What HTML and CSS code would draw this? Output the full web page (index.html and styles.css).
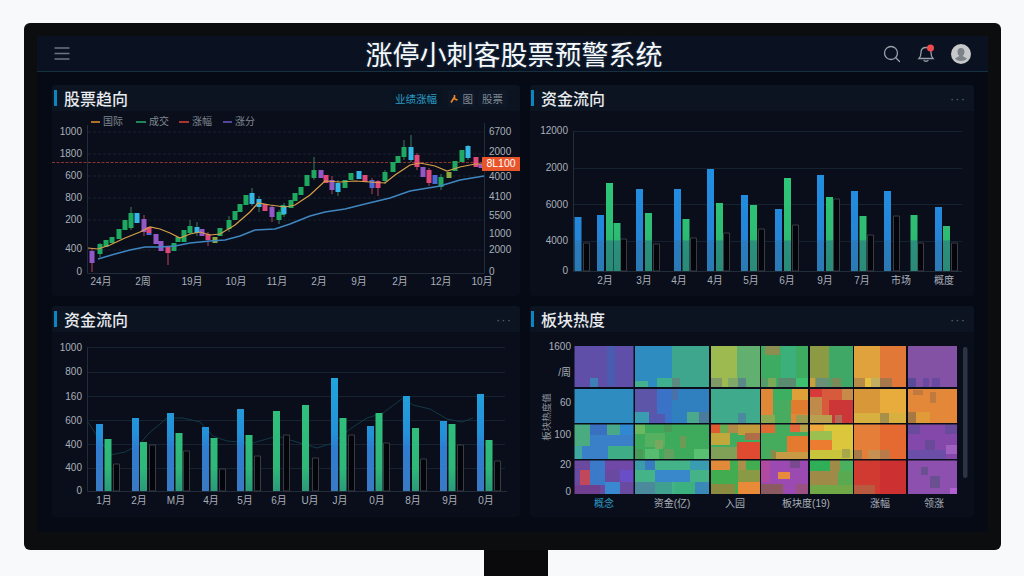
FILE: index.html
```html
<!DOCTYPE html>
<html lang="zh-CN">

    <head>
        <meta charset="UTF-8">
        <meta name="viewport" content="width=device-width, initial-scale=1.0">
        <link rel="stylesheet" href="styles.css">
        <title>涨停小刺客股票预警系统</title>
    </head>

    <body>
        <div class="monitor">
            <div class="screen">
                <header class="topbar">
                    <svg class="menu-icon" width="16" height="13" viewBox="0 0 16 13">
                        <path d="M0.5 1H15.5M0.5 6.500H15.500M0.500 12H15.500"/>
                    </svg>
                    <h1 class="app-title">涨停小刺客股票预警系统</h1>
                    <div class="topbar-icons">
                        <svg class="top-icon" width="18" height="18" viewBox="0 0 18 18">
                            <circle cx="8" cy="8" r="6.500"/>
                            <path d="M12.800 12.800L16.500 16.500"/>
                        </svg>
                        <svg class="top-icon" width="18" height="19" viewBox="0 0 18 19">
                            <path d="M2 14.500c1.500-1.500 2-3 2-6 0-3 2-5 5-5s5 2 5 5c0 3 .5 4.500 2 6z"/>
                            <path d="M7 16.500c.5 1 3.500 1 4 0"/>
                            <circle class="bell-dot" cx="13.500" cy="4" r="3.500"/>
                        </svg>
                        <svg class="avatar" width="20" height="20" viewBox="0 0 20 20">
                            <circle class="avatar-bg" cx="10" cy="10" r="10"/>
                            <path class="avatar-man" d="M10 4c2.200 0 3.500 1.700 3.500 3.800 0 1.800-.8 3.200-1.700 4 .3 1 2.500 1.500 4.200 2.900a9 9 0 0 1-12 0c1.700-1.400 3.900-1.900 4.200-2.900-.9-.8-1.700-2.200-1.700-4C6.500 5.700 7.800 4 10 4z"/>
                        </svg>
                    </div>
                </header>

                <main class="board">
                    <section class="panel">
                        <div class="panel-head">
                            <span class="panel-mark"></span>
                            <h2 class="panel-title">股票趋向</h2>
                            <div class="tabs">
                                <span class="tab tab-active">业绩涨幅</span>
                                <span class="tab tab-chart">
                                    <svg class="tab-icon" width="8" height="9" viewBox="0 0 8 9"><path d="M1 8.500L4.500 3M4.500 1V5M4.500 5L7.500 6"/></svg>
                                    图
                                </span>
                                <span class="tab">股票</span>
                            </div>
                        </div>
                        <svg class="chart" viewBox="52 111 468 185">
                            <g class="grid-dash">
                                <path d="M88 132H484M88 154H484M88 176H484M88 198H484M88 220H484M88 250H484"/>
                            </g>
                            <path class="axis" d="M87.500 125V273.500H484.500V123"/>
                            <path class="alert-line" d="M52 162.500H484"/>

                            <g class="legend">
                                <path class="ln-orange" d="M91 122H100"/><text class="legend-text" x="103" y="122">国际</text>
                                <path class="ln-green" d="M136 122H146"/><text class="legend-text" x="149" y="122">成交</text>
                                <path class="ln-red" d="M179 122H189"/><text class="legend-text" x="192" y="122">涨幅</text>
                                <path class="ln-purple" d="M223 122H232"/><text class="legend-text" x="235" y="122">涨分</text>
                            </g>

                            <g class="lbl end">
                                <text x="82" y="132">1000</text>
                                <text x="82" y="154">1800</text>
                                <text x="82" y="176">600</text>
                                <text x="82" y="198">800</text>
                                <text x="82" y="220">200</text>
                                <text x="82" y="249">400</text>
                                <text x="82" y="272">0</text>
                            </g>
                            <g class="lbl">
                                <text x="489" y="132">6700</text>
                                <text x="489" y="152">2000</text>
                                <text x="489" y="177">4000</text>
                                <text x="489" y="197">4100</text>
                                <text x="489" y="216">5500</text>
                                <text x="489" y="234">1000</text>
                                <text x="489" y="250">2000</text>
                                <text x="489" y="272">0</text>
                            </g>
                            <g class="lbl mid">
                                <text x="101" y="282">24月</text>
                                <text x="143" y="282">2周</text>
                                <text x="192" y="282">19月</text>
                                <text x="236" y="282">10月</text>
                                <text x="277" y="282">11月</text>
                                <text x="319" y="282">2月</text>
                                <text x="359" y="282">9月</text>
                                <text x="400" y="282">2月</text>
                                <text x="441" y="282">12月</text>
                                <text x="482" y="282">10月</text>
                            </g>

                            <g class="candles">
                                <path class="wick wick-green" d="M100 243V257M131 207V230M190 220V235M197 222V236M229 216V232M252 188V206M259 196V212M279 210V224M284 203V217M314 157V180M338 180V196M385 170V184M404 140V160M411 135V162M441 174V190M468 145V160"/>
                                <path class="wick wick-red" d="M92 249V272M168 247V265M144 215V236M208 232V246M272 205V222M332 176V194M372 178V194M378 180V196M417 153V170M429 168V186"/>
                                <path class="body green" d="M100 244V254M106 240V247M112 237V243M119 229V239M125 220V230M131 213V228M174 243V251M178 237V242M184 230V242M190 226V233M220 228V236M229 220V229M235 211V220M240 204V212M246 195V205M279 212V220M283 205V215M291 200V208M295 193V201M301 187V195M307 175V186M314 170V178M345 180V188M351 173V180M385 172V181M393 162V172M398 156V163M404 147V157M441 177V187M455 161V171M462 150V162"/>
                                <path class="body cyan" d="M137 213V223M197 227V233M252 193V204M259 199V207M284 206V214M338 183V192M359 171V179M411 147V160M468 146V158"/>
                                <path class="body purple" d="M92 251V263M144 219V232M156 234V244M161 241V251M202 229V236M272 207V217M321 170V178M332 180V190M423 167V177M481 164V168"/>
                                <path class="body pink" d="M149 227V233M168 247V253M208 234V240M265 204V211M326 175V183M365 175V182M378 181V188M417 155V167M429 170V183M476 157V167"/>
                                <path class="body blue" d="M435 175V184M372 180V188M149 233V235"/>
                                <path class="body lime" d="M215 237V243M449 172V178"/>
                            </g>

                            <path class="ma-orange" d="M88 248L98 249L110 245L125 238L140 232L150 227L160 229L170 233L180 238L190 234L200 232L210 235L220 234L235 225L250 212L258 203L270 205L285 207L295 205L310 195L325 181L340 182L355 181L370 182L385 183L395 175L410 165L420 163L435 166L447 171L460 167L475 164L484 164"/>
                            <path class="ma-blue" d="M98 259L115 254L130 250L145 247L160 247L175 246L190 243L210 241L225 240L240 236L255 230L275 229L290 224L310 216L325 212L345 209L365 204L390 198L410 191L440 186L460 180L484 176"/>

                            <rect class="price-tag" x="482" y="157" width="38" height="14"/>
                            <text class="price-text" x="501" y="164.500">8L100</text>
                        </svg>
                    </section>

                    <section class="panel panel-right">
                        <div class="panel-head">
                            <span class="panel-mark"></span>
                            <h2 class="panel-title">资金流向</h2>
                            <span class="more">···</span>
                        </div>
                        <svg class="chart" viewBox="530 111 444 185">
                            <defs>
                                <linearGradient id="blueA" gradientUnits="userSpaceOnUse" x1="0" y1="169" x2="0" y2="271">
                                    <stop offset="0" stop-color="#2190e2"/>
                                    <stop offset=".69" stop-color="#2584d6"/>
                                    <stop offset=".71" stop-color="#2a7cc0"/>
                                    <stop offset="1" stop-color="#2a7ab4"/>
                                </linearGradient>
                                <linearGradient id="greenA" gradientUnits="userSpaceOnUse" x1="0" y1="178" x2="0" y2="271">
                                    <stop offset="0" stop-color="#2ec77a"/>
                                    <stop offset=".66" stop-color="#2dbb72"/>
                                    <stop offset=".68" stop-color="#2a907c"/>
                                    <stop offset="1" stop-color="#2a8a78"/>
                                </linearGradient>
                            </defs>
                            <path class="grid" d="M573 131.500H962M573 168.500H962M573 204.500H962M573 241.500H962"/>
                            <path class="axis" d="M573.500 131V271.500H962"/>
                            <g class="lbl end">
                                <text x="568" y="131">12000</text>
                                <text x="568" y="168">2000</text>
                                <text x="568" y="205">6000</text>
                                <text x="568" y="241">4000</text>
                                <text x="568" y="271">0</text>
                            </g>
                            <g class="lbl mid">
                                <text x="605" y="281">2月</text>
                                <text x="644" y="281">3月</text>
                                <text x="679" y="281">4月</text>
                                <text x="715" y="281">4月</text>
                                <text x="751" y="281">5月</text>
                                <text x="787" y="281">6月</text>
                                <text x="825" y="281">9月</text>
                                <text x="862" y="281">7月</text>
                                <text x="901" y="281">市场</text>
                                <text x="944" y="281">概度</text>
                            </g>
                            <path class="bar-outline" d="M583.500 243h6v28h-6zM620.500 239h6v32h-6zM653.500 244h6v27h-6zM690.500 238h6v33h-6zM723.500 233h6v38h-6zM758.500 229h6v42h-6zM792.500 225h6v46h-6zM833.500 199h6v72h-6zM867.500 235h6v36h-6zM893.500 216h6v55h-6zM917.500 243h6v28h-6zM951.500 243h6v28h-6z"/>
                            <path class="bar" stroke="url(#blueA)" d="M578 217V271M600.500 215V271M639.500 189V271M677.500 189V271M710.500 169V271M744.500 195V271M778.500 209V271M820.500 175V271M854.500 191V271M887.500 191V271M938.500 207V271"/>
                            <path class="bar" stroke="url(#greenA)" d="M609.500 183V271M617 223V271M648.500 213V271M686 219V271M719.500 203V271M753.500 205V271M787.500 178V271M829.500 197V271M863 216V271M914 215V271M946.500 226V271"/>
                        </svg>
                    </section>

                    <section class="panel">
                        <div class="panel-head">
                            <span class="panel-mark"></span>
                            <h2 class="panel-title">资金流向</h2>
                            <span class="more">···</span>
                        </div>
                        <svg class="chart" viewBox="52 332 468 185">
                            <defs>
                                <linearGradient id="blueB" gradientUnits="userSpaceOnUse" x1="0" y1="378" x2="0" y2="491">
                                    <stop offset="0" stop-color="#1fa6dc"/>
                                    <stop offset=".5" stop-color="#2490d8"/>
                                    <stop offset=".62" stop-color="#2f7cd0"/>
                                    <stop offset="1" stop-color="#3a7ac4"/>
                                </linearGradient>
                                <linearGradient id="greenB" gradientUnits="userSpaceOnUse" x1="0" y1="405" x2="0" y2="491">
                                    <stop offset="0" stop-color="#2fc07c"/>
                                    <stop offset=".72" stop-color="#2fb878"/>
                                    <stop offset="1" stop-color="#2b9a7a"/>
                                </linearGradient>
                            </defs>
                            <path class="grid" d="M87 347.500H505M87 372.500H505M87 396.500H505M87 420.500H505M87 444.500H505M87 468.500H505"/>
                            <path class="axis" d="M87.500 347V491.500H507"/>
                            <path class="flow-line" d="M87 421L110 455L125 452L140 444L148 434L167 418L183 418L200 422L213 436L227 441L253 443L277 436L300 443L317 448L333 443L350 429L367 418L383 413L403 398L413 405L430 409L447 419L462 422L473 418"/>
                            <g class="lbl end">
                                <text x="82" y="348">1000</text>
                                <text x="82" y="372">800</text>
                                <text x="82" y="397">160</text>
                                <text x="82" y="421">600</text>
                                <text x="82" y="445">400</text>
                                <text x="82" y="468">400</text>
                                <text x="82" y="491">0</text>
                            </g>
                            <g class="lbl mid">
                                <text x="104" y="501">1月</text>
                                <text x="139" y="501">2月</text>
                                <text x="176" y="501">M月</text>
                                <text x="211" y="501">4月</text>
                                <text x="245" y="501">5月</text>
                                <text x="279" y="501">6月</text>
                                <text x="310" y="501">U月</text>
                                <text x="340" y="501">J月</text>
                                <text x="377" y="501">0月</text>
                                <text x="413" y="501">8月</text>
                                <text x="450" y="501">9月</text>
                                <text x="486" y="501">0月</text>
                            </g>
                            <path class="bar-outline" d="M113.500 464h6v27h-6zM149.500 445h6v46h-6zM183.500 451h6v40h-6zM219.500 469h6v22h-6zM254.500 456h6v35h-6zM283.500 435h6v56h-6zM312.500 458h6v33h-6zM348.500 435h6v56h-6zM383.500 443h6v48h-6zM420.500 459h6v32h-6zM457.500 445h6v46h-6zM494.500 461h6v30h-6z"/>
                            <path class="bar" stroke="url(#blueB)" d="M99.500 424V491M135.500 418V491M170.500 413V491M205.500 427V491M240.500 409V491M334.500 378V491M370.500 426V491M406.500 396V491M443.500 421V491M480.500 394V491"/>
                            <path class="bar" stroke="url(#greenB)" d="M108 439V491M143.500 442V491M179 433V491M214 438V491M249 435V491M276.500 411V491M305.500 405V491M343 418V491M379 413V491M415.500 428V491M452 424V491M489 440V491"/>
                        </svg>
                    </section>

                    <section class="panel panel-right">
                        <div class="panel-head">
                            <span class="panel-mark"></span>
                            <h2 class="panel-title">板块热度</h2>
                            <span class="more">···</span>
                        </div>
                        <svg class="chart" viewBox="530 332 444 185">
                            <defs>
                                <clipPath id="heatClip">
                                    <path d="M574.500 346H633.500V387H574.500zM635 346H709V387H635zM711 346H760V387H711zM761 346H808V387H761zM810 346H853V387H810zM854 346H906V387H854zM908 346H957V387H908z"/>
                                    <path d="M574.500 389H633.500V423H574.500zM635 389H709V423H635zM711 389H760V423H711zM761 389H808V423H761zM810 389H853V423H810zM854 389H906V423H854zM908 389H957V423H908z"/>
                                    <path d="M574.500 424.500H633.500V459H574.500zM635 424.500H709V459H635zM711 424.500H760V459H711zM761 424.500H808V459H761zM810 424.500H853V459H810zM854 424.500H906V459H854zM908 424.500H957V459H908z"/>
                                    <path d="M574.500 460.500H633.500V494H574.500zM635 460.500H709V494H635zM711 460.500H760V494H711zM761 460.500H808V494H761zM810 460.500H853V494H810zM854 460.500H906V494H854zM908 460.500H957V494H908z"/>
                                </clipPath>
                            </defs>
                            <g class="lbl end">
                                <text x="571" y="347">1600</text>
                                <text x="571" y="373">/周</text>
                                <text x="571" y="403">60</text>
                                <text x="571" y="435">100</text>
                                <text x="571" y="465">20</text>
                                <text x="571" y="492">0</text>
                            </g>
                            <text class="side-label" transform="translate(547 417) rotate(-90)">板块热度值</text>

                            <g clip-path="url(#heatClip)">
                                <g class="heat">
                                    <!-- row 1 -->
                                    <rect x="574" y="346" width="60" height="41" fill="#5f4fa8"/>
                                    <rect x="607" y="346" width="8" height="40" fill="#4a5cb0"/>
                                    <rect x="590" y="378" width="8" height="9" fill="#3f7fb8"/>
                                    <rect x="635" y="346" width="37" height="41" fill="#2f8cc0"/>
                                    <rect x="672" y="346" width="37" height="41" fill="#3fa68e"/>
                                    <rect x="635" y="381" width="13" height="6" fill="#43b090"/>
                                    <rect x="657" y="378" width="15" height="9" fill="#3fb08e"/>
                                    <rect x="672" y="378" width="8" height="9" fill="#5a8a80"/>
                                    <rect x="711" y="346" width="26" height="41" fill="#9cba50"/>
                                    <rect x="737" y="346" width="23" height="41" fill="#62b070"/>
                                    <rect x="711" y="378" width="11" height="9" fill="#7f9a68"/>
                                    <rect x="728" y="378" width="10" height="9" fill="#7fa868"/>
                                    <rect x="738" y="378" width="8" height="9" fill="#5a8a88"/>
                                    <rect x="761" y="346" width="47" height="41" fill="#3dab60"/>
                                    <rect x="781" y="346" width="15" height="41" fill="#3cb07a"/>
                                    <rect x="765" y="346" width="15" height="9" fill="#8a8e50"/>
                                    <rect x="761" y="378" width="6" height="9" fill="#5a9a68"/>
                                    <rect x="768" y="378" width="8" height="9" fill="#7aa858"/>
                                    <rect x="778" y="378" width="18" height="9" fill="#5a8a70"/>
                                    <rect x="796" y="378" width="12" height="9" fill="#3cc070"/>
                                    <rect x="810" y="346" width="19" height="41" fill="#8c9a44"/>
                                    <rect x="829" y="346" width="24" height="41" fill="#3fa866"/>
                                    <rect x="810" y="378" width="5" height="9" fill="#c8a040"/>
                                    <rect x="816" y="378" width="13" height="9" fill="#6a9078"/>
                                    <rect x="831" y="378" width="10" height="9" fill="#7a8a58"/>
                                    <rect x="854" y="346" width="26" height="41" fill="#e0a23c"/>
                                    <rect x="880" y="346" width="26" height="41" fill="#e27838"/>
                                    <rect x="854" y="378" width="11" height="9" fill="#b88a48"/>
                                    <rect x="865" y="378" width="6" height="9" fill="#e8c040"/>
                                    <rect x="871" y="378" width="9" height="9" fill="#c0b060"/>
                                    <rect x="880" y="378" width="12" height="9" fill="#a8784a"/>
                                    <rect x="908" y="346" width="49" height="41" fill="#8452a4"/>
                                    <rect x="908" y="378" width="8" height="9" fill="#5a4a9a"/>
                                    <rect x="923" y="378" width="6" height="9" fill="#6a4aa0"/>
                                    <rect x="932" y="378" width="8" height="9" fill="#6a4aa0"/>

                                    <!-- row 2 -->
                                    <rect x="574" y="389" width="60" height="35" fill="#2f8cc0"/>
                                    <rect x="635" y="389" width="74" height="35" fill="#3080c0"/>
                                    <rect x="635" y="389" width="22" height="25" fill="#5c55a8"/>
                                    <rect x="657" y="389" width="15" height="35" fill="#3a72c8"/>
                                    <rect x="635" y="412" width="14" height="12" fill="#3a9cb0"/>
                                    <rect x="649" y="414" width="16" height="10" fill="#5658b0"/>
                                    <rect x="672" y="389" width="6" height="11" fill="#4a72a8"/>
                                    <rect x="687" y="412" width="12" height="12" fill="#4aa88c"/>
                                    <rect x="699" y="412" width="10" height="12" fill="#4a7a9c"/>
                                    <rect x="711" y="389" width="49" height="35" fill="#3faa8c"/>
                                    <rect x="738" y="413" width="8" height="11" fill="#4a8a9c"/>
                                    <rect x="761" y="389" width="47" height="35" fill="#e08838"/>
                                    <rect x="773" y="389" width="19" height="11" fill="#3cb060"/>
                                    <rect x="792" y="389" width="16" height="11" fill="#e0a038"/>
                                    <rect x="773" y="400" width="18" height="24" fill="#48ac60"/>
                                    <rect x="791" y="400" width="17" height="14" fill="#e07c30"/>
                                    <rect x="761" y="415" width="14" height="9" fill="#8ca850"/>
                                    <rect x="796" y="415" width="12" height="9" fill="#9a9a50"/>
                                    <rect x="810" y="389" width="43" height="35" fill="#d85a3c"/>
                                    <rect x="810" y="389" width="12" height="8" fill="#d83a3a"/>
                                    <rect x="842" y="389" width="11" height="11" fill="#c88a48"/>
                                    <rect x="810" y="397" width="12" height="27" fill="#c08a4a"/>
                                    <rect x="829" y="400" width="24" height="24" fill="#cc3636"/>
                                    <rect x="810" y="415" width="22" height="9" fill="#b8a050"/>
                                    <rect x="835" y="415" width="7" height="9" fill="#b06a58"/>
                                    <rect x="854" y="389" width="26" height="35" fill="#d8983a"/>
                                    <rect x="880" y="389" width="26" height="35" fill="#e8ac3c"/>
                                    <rect x="854" y="413" width="52" height="11" fill="#d8b040"/>
                                    <rect x="880" y="413" width="9" height="10" fill="#a89048"/>
                                    <rect x="908" y="389" width="49" height="35" fill="#e28838"/>
                                    <rect x="930" y="392" width="6" height="11" fill="#c07a40"/>
                                    <rect x="913" y="390" width="10" height="5" fill="#c07a40"/>
                                    <rect x="908" y="412" width="8" height="12" fill="#a87844"/>
                                    <rect x="916" y="412" width="14" height="12" fill="#e09a38"/>

                                    <!-- row 3 -->
                                    <rect x="574" y="424" width="60" height="36" fill="#3a80c8"/>
                                    <rect x="574" y="424" width="16" height="22" fill="#4aaa80"/>
                                    <rect x="590" y="424" width="17" height="11" fill="#3a70c0"/>
                                    <rect x="607" y="424" width="13" height="11" fill="#4aa88a"/>
                                    <rect x="620" y="424" width="14" height="11" fill="#2f88d0"/>
                                    <rect x="608" y="446" width="26" height="14" fill="#3fae86"/>
                                    <rect x="574" y="446" width="8" height="14" fill="#3fa6a0"/>
                                    <rect x="635" y="424" width="74" height="36" fill="#3daa5c"/>
                                    <rect x="635" y="424" width="10" height="10" fill="#6ab860"/>
                                    <rect x="645" y="433" width="20" height="14" fill="#55b060"/>
                                    <rect x="655" y="440" width="8" height="9" fill="#78a860"/>
                                    <rect x="664" y="424" width="8" height="8" fill="#4a9a58"/>
                                    <rect x="680" y="436" width="6" height="12" fill="#6e9a58"/>
                                    <rect x="635" y="449" width="8" height="11" fill="#4a9a58"/>
                                    <rect x="645" y="449" width="14" height="11" fill="#58bc70"/>
                                    <rect x="664" y="449" width="10" height="11" fill="#62a060"/>
                                    <rect x="694" y="449" width="15" height="11" fill="#58c070"/>
                                    <rect x="711" y="424" width="49" height="36" fill="#40ac60"/>
                                    <rect x="711" y="424" width="9" height="9" fill="#e05a30"/>
                                    <rect x="720" y="424" width="8" height="9" fill="#6aaa50"/>
                                    <rect x="728" y="424" width="10" height="9" fill="#b08a48"/>
                                    <rect x="738" y="424" width="22" height="11" fill="#c09a3c"/>
                                    <rect x="711" y="433" width="19" height="12" fill="#c0a83c"/>
                                    <rect x="745" y="433" width="15" height="7" fill="#b06e48"/>
                                    <rect x="737" y="442" width="23" height="18" fill="#e04a30"/>
                                    <rect x="711" y="447" width="26" height="13" fill="#80a058"/>
                                    <rect x="761" y="424" width="47" height="36" fill="#44ac5c"/>
                                    <rect x="761" y="424" width="14" height="9" fill="#e06a34"/>
                                    <rect x="790" y="424" width="10" height="8" fill="#e0683a"/>
                                    <rect x="800" y="424" width="8" height="8" fill="#b8a048"/>
                                    <rect x="787" y="436" width="21" height="24" fill="#e47a30"/>
                                    <rect x="771" y="450" width="5" height="10" fill="#8a8a48"/>
                                    <rect x="776" y="452" width="32" height="8" fill="#c89a44"/>
                                    <rect x="810" y="424" width="43" height="36" fill="#dcc63c"/>
                                    <rect x="810" y="424" width="14" height="7" fill="#f0a83c"/>
                                    <rect x="810" y="431" width="22" height="9" fill="#9cc050"/>
                                    <rect x="810" y="440" width="22" height="10" fill="#ec7c30"/>
                                    <rect x="810" y="450" width="43" height="10" fill="#c8c43c"/>
                                    <rect x="842" y="449" width="8" height="9" fill="#a8a84a"/>
                                    <rect x="854" y="424" width="26" height="36" fill="#e47e38"/>
                                    <rect x="880" y="424" width="26" height="36" fill="#e46a32"/>
                                    <rect x="854" y="450" width="8" height="10" fill="#a87a4a"/>
                                    <rect x="868" y="450" width="12" height="10" fill="#c89050"/>
                                    <rect x="880" y="450" width="10" height="10" fill="#b87a48"/>
                                    <rect x="908" y="424" width="49" height="36" fill="#8448aa"/>
                                    <rect x="908" y="424" width="12" height="10" fill="#6a4a9c"/>
                                    <rect x="945" y="424" width="12" height="10" fill="#6a4a9c"/>
                                    <rect x="925" y="440" width="10" height="10" fill="#6a4a98"/>
                                    <rect x="908" y="450" width="38" height="10" fill="#6a4ea8"/>
                                    <rect x="946" y="445" width="11" height="9" fill="#a060c0"/>

                                    <!-- row 4 -->
                                    <rect x="574" y="460" width="60" height="34" fill="#6a4aa0"/>
                                    <rect x="580" y="470" width="10" height="15" fill="#c0485a"/>
                                    <rect x="590" y="460" width="15" height="25" fill="#3a7ac8"/>
                                    <rect x="605" y="460" width="29" height="10" fill="#7048a8"/>
                                    <rect x="620" y="470" width="14" height="12" fill="#6a4ec8"/>
                                    <rect x="574" y="485" width="26" height="9" fill="#703f90"/>
                                    <rect x="605" y="482" width="15" height="12" fill="#3a88d0"/>
                                    <rect x="635" y="460" width="74" height="34" fill="#44b488"/>
                                    <rect x="635" y="460" width="10" height="10" fill="#3a9ca8"/>
                                    <rect x="645" y="460" width="10" height="10" fill="#3a7ac0"/>
                                    <rect x="690" y="460" width="19" height="10" fill="#3a9cb0"/>
                                    <rect x="655" y="470" width="35" height="12" fill="#3a88cc"/>
                                    <rect x="635" y="482" width="20" height="12" fill="#4a8a9c"/>
                                    <rect x="655" y="482" width="17" height="12" fill="#3fa090"/>
                                    <rect x="675" y="482" width="20" height="12" fill="#3db080"/>
                                    <rect x="695" y="482" width="14" height="12" fill="#3a88b8"/>
                                    <rect x="711" y="460" width="49" height="34" fill="#42ac50"/>
                                    <rect x="711" y="460" width="19" height="10" fill="#e08a3a"/>
                                    <rect x="738" y="460" width="8" height="10" fill="#a8904a"/>
                                    <rect x="738" y="470" width="22" height="12" fill="#8a9a44"/>
                                    <rect x="711" y="484" width="24" height="10" fill="#8a8a40"/>
                                    <rect x="738" y="482" width="22" height="12" fill="#e88a38"/>
                                    <rect x="761" y="460" width="47" height="34" fill="#9a4ab0"/>
                                    <rect x="761" y="460" width="9" height="22" fill="#b04aa0"/>
                                    <rect x="778" y="472" width="12" height="7" fill="#e88a3c"/>
                                    <rect x="790" y="460" width="10" height="8" fill="#7a4a90"/>
                                    <rect x="761" y="484" width="22" height="10" fill="#8a5a60"/>
                                    <rect x="796" y="484" width="12" height="10" fill="#9a5080"/>
                                    <rect x="810" y="460" width="43" height="34" fill="#a08a48"/>
                                    <rect x="810" y="460" width="20" height="11" fill="#2fb058"/>
                                    <rect x="840" y="460" width="13" height="11" fill="#4ab060"/>
                                    <rect x="838" y="471" width="15" height="14" fill="#5aa850"/>
                                    <rect x="810" y="485" width="43" height="9" fill="#70a848"/>
                                    <rect x="854" y="460" width="52" height="34" fill="#d03a30"/>
                                    <rect x="880" y="460" width="26" height="34" fill="#cc3030"/>
                                    <rect x="854" y="485" width="21" height="9" fill="#b85a40"/>
                                    <rect x="908" y="460" width="49" height="34" fill="#8e50ae"/>
                                    <rect x="921" y="467" width="7" height="8" fill="#6a5090"/>
                                    <rect x="930" y="476" width="10" height="12" fill="#6a5090"/>
                                    <rect x="950" y="488" width="7" height="6" fill="#b060d0"/>
                                </g>
                            </g>
                            <rect class="scroll-track" x="963" y="347" width="4.500" height="131" rx="2"/>

                            <g class="lbl mid">
                                <text class="lbl-blue" x="604" y="504">概念</text>
                                <text x="672" y="504">资金(亿)</text>
                                <text x="735" y="504">入园</text>
                                <text x="806" y="504">板块度(19)</text>
                                <text x="880" y="504">涨幅</text>
                                <text x="934" y="504">领涨</text>
                            </g>
                        </svg>
                    </section>
                </main>
            </div>
        </div>
        <div class="stand"></div>
    </body>
</html>
```

FILE: styles.css
```css
body {
    margin: 0;
    height: 576px;
    overflow: hidden;
    padding-top: 23px;
    box-sizing: border-box;
    background-color: #f7f9fb;
    font-family: "Liberation Sans", "Noto Sans CJK SC", sans-serif;
}

.monitor {
    width: 977px;
    height: 527px;
    margin-left: 24px;
    padding: 13px;
    box-sizing: border-box;
    background-color: #0c0d0f;
    border-radius: 6px;
}

.stand {
    width: 64px;
    height: 26px;
    margin-left: 484px;
    background-color: #0a0a0c;
}

.screen {
    height: 496px;
    display: flex;
    flex-direction: column;
    background-color: #050a14;
}

.topbar {
    height: 35px;
    flex-shrink: 0;
    display: grid;
    grid-template-columns: 1fr auto 1fr;
    align-items: center;
    padding: 0 17px;
    background-color: #0a1120;
    border-bottom: 1px solid #15303f;
}

.menu-icon path {
    fill: none;
    stroke: #6c7682;
    stroke-width: 1.3;
}

.app-title {
    margin: 0 0 0 3px;
    font-family: "Noto Sans CJK SC", sans-serif;
    font-size: 27px;
    font-weight: 400;
    line-height: 35px;
    color: #f6f8fa;
    text-shadow: 0 0 3px rgba(110, 180, 230, 0.3);
}

.topbar-icons {
    display: flex;
    align-items: center;
    justify-content: flex-end;
    gap: 16px;
}

.top-icon path,
.top-icon circle {
    fill: none;
    stroke: #98a0aa;
    stroke-width: 1.3;
    stroke-linecap: round;
}

.top-icon .bell-dot {
    fill: #f04a4a;
    stroke: none;
}

.avatar-bg {
    fill: #c6c8ca;
}

.avatar-man {
    fill: #7c8288;
}

.board {
    display: grid;
    grid-template-columns: 468px 444px;
    grid-template-rows: 211px 211px;
    gap: 10px;
    padding: 13px 14px 0 15px;
}

.panel {
    display: flex;
    flex-direction: column;
    overflow: hidden;
    background-color: #0a0e1a;
    border-radius: 3px;
}

.panel-head {
    height: 26px;
    flex-shrink: 0;
    display: flex;
    align-items: center;
    gap: 7px;
    padding: 0 8px 0 2px;
    background-color: #0c1422;
}

.panel-right .panel-head {
    padding-left: 1px;
}

.panel-mark {
    width: 3px;
    height: 16px;
    background-color: #0a86c2;
}

.panel-title {
    margin: 0;
    flex: 1;
    font-family: "Noto Sans CJK SC", sans-serif;
    font-size: 16px;
    font-weight: 500;
    color: #e8ebee;
}

.more {
    font-size: 13px;
    letter-spacing: 1px;
    color: #5c6470;
}

.tabs {
    display: flex;
    align-items: center;
    gap: 3px;
    margin-right: 5px;
}

.tab {
    display: flex;
    align-items: center;
    height: 17px;
    padding: 0 4px;
    font-size: 10.5px;
    color: #7f8792;
    background-color: #0e1726;
    border-radius: 2px;
}

.tab-active {
    margin-right: 3px;
    padding: 0 4.500px;
    color: #2a9cc2;
    background-color: #091422;
}

.tab-chart {
    gap: 5px;
    padding: 0 2px;
}

.tab-icon path {
    fill: none;
    stroke: #f08a24;
    stroke-width: 1.6;
}

.chart {
    display: block;
    width: 100%;
    height: 185px;
    flex-shrink: 0;
}

.chart text {
    dominant-baseline: middle;
}

.lbl {
    font-size: 10px;
    fill: #a9b0ba;
}

.legend-text {
    font-size: 10px;
    fill: #7f8792;
}

.side-label {
    font-size: 9.5px;
    fill: #8a929c;
    text-anchor: middle;
}

.end {
    text-anchor: end;
}

.mid {
    text-anchor: middle;
}

.lbl-blue {
    fill: #2a9cc2;
}

.grid,
.grid-dash path {
    fill: none;
    stroke: #172230;
    stroke-width: 1;
}

.grid-dash path {
    stroke-dasharray: 3 2;
}

.axis {
    fill: none;
    stroke: #222d3a;
    stroke-width: 1;
}

.alert-line {
    stroke: #8a3432;
    stroke-width: 1;
    stroke-dasharray: 3 1.500;
}

.legend path {
    stroke-width: 1.500;
}

.ln-orange {
    stroke: #e8922e;
}

.ln-green {
    stroke: #27b06c;
}

.ln-red {
    stroke: #e0403a;
}

.ln-purple {
    stroke: #6a58c8;
}

.candles {
    filter: blur(0.3px);
}

.wick {
    fill: none;
    stroke-width: 1;
}

.wick-green {
    stroke: #3c7a58;
}

.wick-red {
    stroke: #b8405c;
}

.body {
    fill: none;
    stroke-width: 5;
}

.green {
    stroke: #1fa860;
}

.cyan {
    stroke: #35b8e6;
}

.purple {
    stroke: #9258c8;
}

.pink {
    stroke: #e0487c;
}

.blue {
    stroke: #4a68d8;
}

.lime {
    stroke: #8aa840;
}

.ma-orange {
    fill: none;
    stroke: #d8a048;
    stroke-width: 1.200;
}

.ma-blue {
    fill: none;
    stroke: #3f86c0;
    stroke-width: 1.500;
}

.price-tag {
    fill: #e8552a;
}

.price-text {
    font-size: 10.5px;
    fill: #fff;
    text-anchor: middle;
}

.bar {
    fill: none;
    stroke-width: 7;
}

.bar-outline {
    fill: #03050a;
    stroke: #3a3c44;
    stroke-width: 1;
}

.flow-line {
    fill: none;
    stroke: #123a48;
    stroke-width: 1;
}

.heat {
    filter: blur(0.5px);
}

.scroll-track {
    fill: #2a3442;
}
```
